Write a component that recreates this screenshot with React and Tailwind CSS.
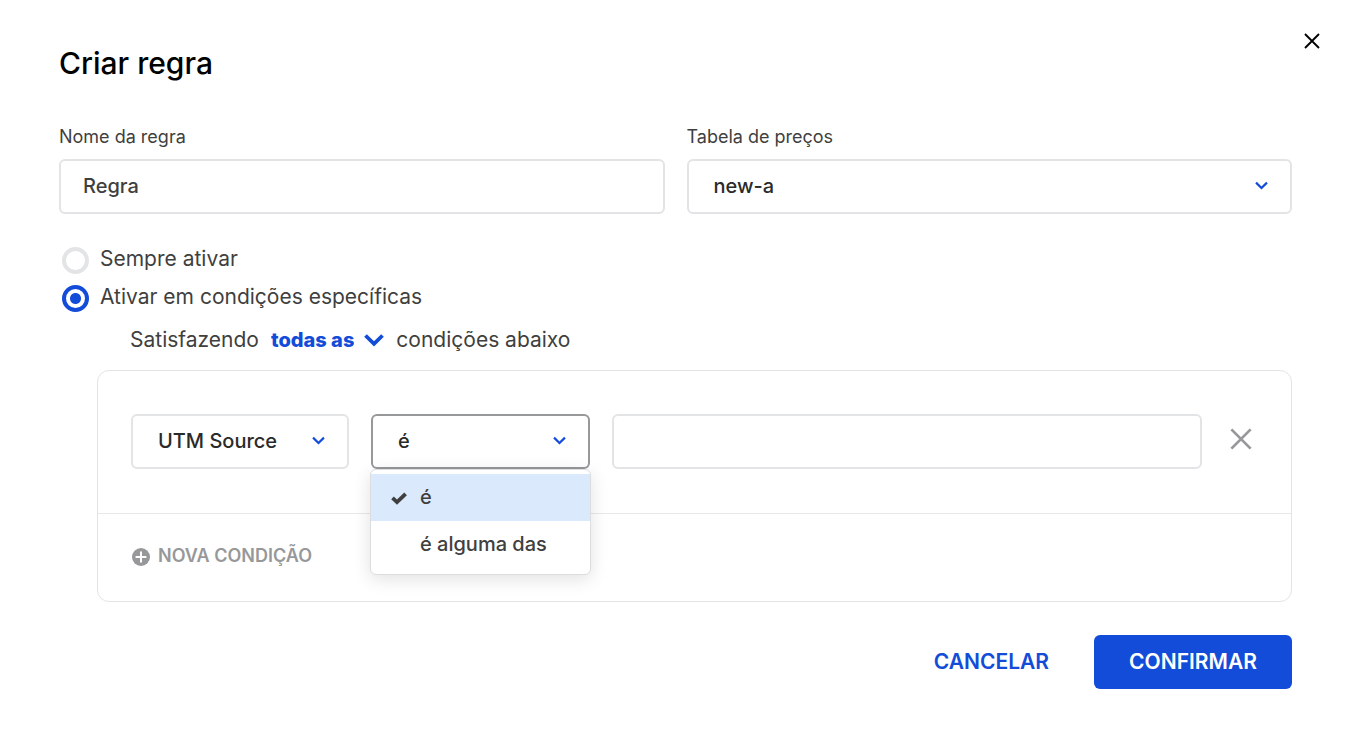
import { useState } from "react";

function Chevron({ className, thin = false }) {
  return (
    <svg viewBox="0 0 20 14" className={className} fill="none" stroke="currentColor" strokeWidth={thin ? 3.4 : 3.8} aria-hidden="true">
      <path d="M1.5 2.5 L10 10.8 L18.5 2.5" />
    </svg>
  );
}

function Cross({ className, thick }) {
  return (
    <svg viewBox="0 0 24 24" className={className} fill="none" stroke="currentColor" strokeWidth={thick} aria-hidden="true">
      <path d="M1.5 1.5 L22.5 22.5 M22.5 1.5 L1.5 22.5" />
    </svg>
  );
}

function Select({ id, label, options, active = false, children }) {
  return (
    <div className="relative">
      <select
        id={id}
        aria-label={label}
        className={`h-[55px] w-full appearance-none rounded-md border-2 bg-white pb-0.5 pl-[25px] text-xl font-[450] text-[#2a2a2a] outline-none ${active ? "border-[#979899]" : "border-[#e3e4e6]"}`}
      >
        {options.map((option) => (
          <option key={option}>{option}</option>
        ))}
      </select>
      <Chevron thin className="pointer-events-none absolute top-[22px] right-6 h-[9px] w-[13px] text-[#134cd8]" />
      {children}
    </div>
  );
}

function Radio({ label, checked, onChange }) {
  return (
    <label className="flex h-7 items-center gap-[11px] pl-[3px] text-[21px]">
      <input
        type="radio"
        name="activation"
        checked={checked}
        onChange={onChange}
        className="mt-0.5 size-[27px] shrink-0 appearance-none rounded-full border-4 border-[#e3e4e6] checked:border-[#134cd8] checked:bg-[radial-gradient(circle,#134cd8_5px,transparent_6px)]"
      />
      {label}
    </label>
  );
}

function Check() {
  return (
    <svg viewBox="0 0 16 13" className="mt-1 h-[13px] w-4" fill="none" stroke="currentColor" strokeWidth="3.8" aria-hidden="true">
      <path d="M1.5 5.8 L6 10.1 L14.6 1.8" />
    </svg>
  );
}

function OperatorMenu() {
  const items = [
    { text: "é", selected: true },
    { text: "é alguma das", selected: false },
  ];
  return (
    <ul
      role="listbox"
      aria-label="Operadores"
      className="absolute -inset-x-px top-full z-10 rounded-md border border-[#dcdddf] bg-white pt-1 pb-1.5 text-xl font-[450] shadow-[0_4px_18px_rgba(0,0,0,0.12)]"
    >
      {items.map((item) => (
        <li
          key={item.text}
          role="option"
          aria-selected={item.selected}
          className={`flex h-[47px] items-center gap-[13px] pb-0.5 pl-5 ${item.selected ? "bg-[#dbe9fd]" : ""}`}
        >
          <span className="w-4 shrink-0">{item.selected && <Check />}</span>
          {item.text}
        </li>
      ))}
    </ul>
  );
}

export default function App() {
  const [mode, setMode] = useState("specific");
  return (
    <main className="bg-white pb-11 font-['Inter','Liberation_Sans',sans-serif] text-[#3f3f40]">
      <header className="flex items-start justify-between pt-[29px] pr-[22px] pl-[59px]">
        <h1 className="mt-3.5 text-[30px] leading-10 font-[450] text-black">Criar regra</h1>
        <button type="button" aria-label="Fechar" className="flex size-6 items-center justify-center text-black">
          <Cross className="size-4" thick={2.8} />
        </button>
      </header>

      <form className="mt-[42px] pr-[54px] pl-[59px]" onSubmit={(e) => e.preventDefault()}>
        <div className="grid grid-cols-2 gap-x-[22px]">
          <div>
            <label htmlFor="rule-name" className="mb-2.5 block text-lg leading-6">Nome da regra</label>
            <input
              id="rule-name"
              type="text"
              defaultValue="Regra"
              className="h-[55px] w-full rounded-md border-2 border-[#e3e4e6] px-[22px] pb-0.5 text-xl font-[450] outline-none"
            />
          </div>
          <div>
            <label htmlFor="price-table" className="mb-2.5 block text-lg leading-6">Tabela de preços</label>
            <Select id="price-table" options={["new-a"]} />
          </div>
        </div>

        <div className="mt-[31px] flex flex-col gap-2.5">
          <Radio label="Sempre ativar" checked={mode === "always"} onChange={() => setMode("always")} />
          <Radio label="Ativar em condições específicas" checked={mode === "specific"} onChange={() => setMode("specific")} />
        </div>

        <div className="mt-[15px] flex h-7 items-center gap-3 pl-[71px] text-[21px]">
          <span>Satisfazendo</span>
          <span className="relative flex items-center text-[#134cd8]">
            <select aria-label="Combinação das condições" className="field-sizing-content appearance-none bg-transparent pr-[30px] text-xl font-extrabold outline-none">
              <option>todas as</option>
            </select>
            <Chevron className="pointer-events-none absolute right-0 h-[14px] w-5" />
          </span>
          <span>condições abaixo</span>
        </div>

        <section className="mt-4 ml-[38px] rounded-xl border border-[#e3e4e6]">
          <div className="grid grid-cols-[218px_219px_1fr_34px] items-center gap-[22px] px-[33px] pt-[43px] pb-11">
            <Select label="Critério" options={["UTM Source"]} />
            <Select label="Operador" options={["é", "é alguma das"]} active>
              <OperatorMenu />
            </Select>
            <input
              type="text"
              aria-label="Valor"
              className="h-[55px] w-full min-w-0 rounded-md border-2 border-[#e3e4e6] px-[22px] pb-0.5 text-xl font-[450] outline-none"
            />
            <button type="button" aria-label="Remover condição" className="flex h-[55px] items-center justify-center pb-[5px] text-[#979899]">
              <Cross className="size-[22px]" thick={3} />
            </button>
          </div>
          <div className="flex h-[88px] items-center border-t border-[#e8e8ea] px-[34px] pb-1">
            <button type="button" className="flex items-center gap-2 text-lg font-semibold text-[#979899]">
              <svg viewBox="0 0 18 18" className="mt-0.5 size-[18px]" aria-hidden="true">
                <circle cx="9" cy="9" r="9" fill="currentColor" />
                <path d="M9 3.6 V14.4 M3.6 9 H14.4" stroke="#fff" strokeWidth="2" />
              </svg>
              NOVA CONDIÇÃO
            </button>
          </div>
        </section>

        <footer className="mt-[33px] flex justify-end gap-2.5 text-[21px] font-semibold">
          <button type="button" className="h-[54px] rounded-md px-[35px] text-[#134cd8]">CANCELAR</button>
          <button type="submit" className="h-[54px] w-[198px] rounded-md bg-[#134cd8] text-white">CONFIRMAR</button>
        </footer>
      </form>
    </main>
  );
}
